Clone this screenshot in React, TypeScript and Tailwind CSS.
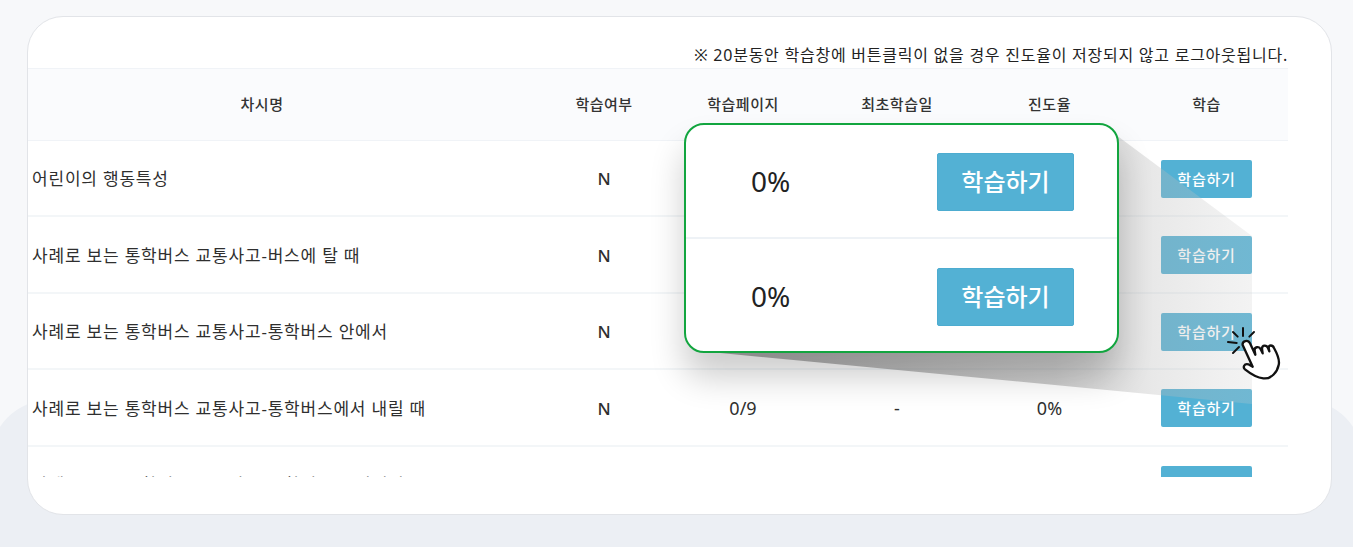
const rows = [
  "어린이의 행동특성",
  "사례로 보는 통학버스 교통사고-버스에 탈 때",
  "사례로 보는 통학버스 교통사고-통학버스 안에서",
  "사례로 보는 통학버스 교통사고-통학버스에서 내릴 때",
  "사례로 보는 통학버스 교통사고-통학버스 주변에서",
];

const cols = "grid grid-cols-[514px_124px_154px_154px_151px_163px] items-center";

function StudyButton() {
  return (
    <button className="flex h-[38px] w-[91px] items-center justify-center rounded-[2px] bg-[#53b1d4] text-[15px] font-medium tracking-[0.8px] text-white">
      학습하기
    </button>
  );
}

function CalloutRow({ last }: { last?: boolean }) {
  return (
    <div
      className={`flex h-[114px] items-center justify-between pl-[65px] pr-[43px] ${
        last ? "" : "border-b-2 border-[#eef2f6]"
      }`}
    >
      <span className="text-[28px] leading-none text-[#222]">0%</span>
      <button className="mt-[2px] flex h-[58px] w-[137px] items-center justify-center rounded-[2px] border border-[#4dacd0] bg-[#53b1d4] text-[24px] font-medium text-white">
        학습하기
      </button>
    </div>
  );
}

function Hand() {
  return (
    <svg
      viewBox="0 0 300 240"
      className="absolute left-[1200px] top-[310px] h-[80px] w-[100px]"
      fill="none"
      stroke="#111"
      strokeLinecap="round"
      strokeLinejoin="round"
    >
      <g strokeWidth="6">
        <path d="M129 54V78" />
        <path d="M162 66L148 80" />
        <path d="M99 66L113 80" />
        <path d="M84 96L110 99" />
        <path d="M99 129L117 111" />
      </g>
      <path
        fill="#fff"
        strokeWidth="7"
        d="M128 105C126 92 144 88 150 100L166 134L164 122C162 110 178 108 182 118L188 130L186 116C186 104 200 104 204 114L208 124L206 114C206 104 218 104 222 114C232 132 240 150 236 165C232 185 215 208 190 205C170 203 150 190 135 178C128 172 132 160 145 163L158 170Z"
      />
    </svg>
  );
}

export default function App() {
  return (
    <div
      className="relative h-[547px] w-[1353px] overflow-hidden bg-[#f7f8fa] pl-[27px] pt-[16px]"
      style={{ fontFamily: '"Noto Sans", "Noto Sans CJK KR", sans-serif' }}
    >
      <div className="absolute -left-[10px] -right-[10px] bottom-0 top-[400px] rounded-t-[60px] bg-[#eceff4]" />

      <div className="relative h-[499px] w-[1305px] rounded-[36px] border border-[#e2e4e8] bg-white pr-[43px]">
        <p className="flex h-[51px] items-end justify-end pb-[1px] text-[16px] tracking-[0.75px] text-[#222]">
          ※ 20분동안 학습창에 버튼클릭이 없을 경우 진도율이 저장되지 않고 로그아웃됩니다.
        </p>

        <div className="h-[409px] overflow-hidden">
          <div className={`${cols} h-[72.5px] border-y border-[#f0f3f7] bg-[#fafbfd] text-center text-[15px] font-medium tracking-[0.5px] text-[#333]`}>
            <div className="pr-[46px]">차시명</div>
            <div>학습여부</div>
            <div>학습페이지</div>
            <div>최초학습일</div>
            <div>진도율</div>
            <div>학습</div>
          </div>

          {rows.map((title) => (
            <div
              key={title}
              className={`${cols} h-[76.5px] border-b-2 border-[#f3f6f8] pt-[2px] text-center text-[18px] text-[#2f2f2f]`}
            >
              <div className="pl-[4px] text-left text-[17px] tracking-[0.8px]">{title}</div>
              <div className="font-medium text-[17px]">N</div>
              <div>0/9</div>
              <div>-</div>
              <div>0%</div>
              <div className="flex justify-center">
                <StudyButton />
              </div>
            </div>
          ))}
        </div>
      </div>

      <svg viewBox="0 0 1353 547" className="pointer-events-none absolute left-0 top-0 h-[547px] w-[1353px]">
        <defs>
          <linearGradient id="beam" gradientUnits="userSpaceOnUse" x1="760" y1="0" x2="1252" y2="0">
            <stop offset="0" stopColor="#7a7a7a" stopOpacity="0.62" />
            <stop offset="0.6" stopColor="#9a9a9a" stopOpacity="0.5" />
            <stop offset="0.8" stopColor="#b8b8b8" stopOpacity="0.32" />
            <stop offset="1" stopColor="#cdcdcd" stopOpacity="0.24" />
          </linearGradient>
        </defs>
        <polygon points="1100,123 1252,236 1252,404 710,352" fill="url(#beam)" />
      </svg>

      <div className="absolute left-[684px] top-[123px] h-[230px] w-[435px] overflow-hidden rounded-[20px] border-2 border-[#12a53f] bg-white shadow-[0_24px_34px_rgba(0,0,0,0.2)]">
        <CalloutRow />
        <CalloutRow last />
      </div>

      <Hand />
    </div>
  );
}
